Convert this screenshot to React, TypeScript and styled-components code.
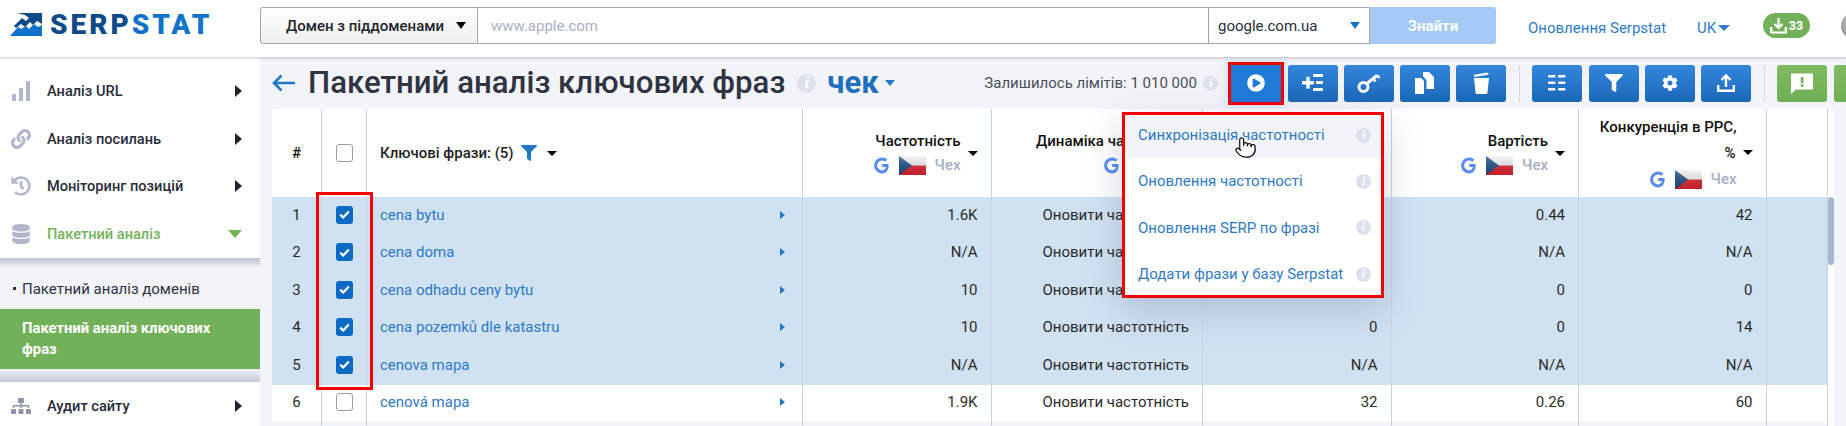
import React from "react";
import styled, { createGlobalStyle } from "styled-components";
import { FaCog, FaDatabase, FaFilter, FaHistory, FaLink, FaPlayCircle, FaSitemap } from "react-icons/fa";
import { Pointer } from "lucide-react";

const Global = createGlobalStyle`
  html, body { margin: 0; padding: 0; background: #fff; }
  body { font-family: Roboto, "Noto Sans", sans-serif; font-size: 15px; color: #2a2d3a; }
  * { box-sizing: border-box; }
`;

const Page = styled.div`
  width: 1846px; height: 426px; overflow: hidden; display: flex; flex-direction: column; background: #fff;
`;
const Top = styled.header`
  height: 57px; flex: none; display: flex; align-items: flex-start; box-shadow: 0 1px 3px rgba(90,95,115,.35); position: relative; z-index: 3; background: #fff;
`;
const LogoArea = styled.div`
  width: 260px; flex: none; height: 57px; padding: 13px 0 0 10px; display: flex; align-items: flex-start; gap: 8px;
`;
const LogoText = styled.div`
  font-family: Roboto, sans-serif; font-weight: 900; font-size: 28px; line-height: 23px; letter-spacing: 3px; color: #0f4b8b;
  span { color: #0f74c9; }
`;
const Search = styled.div`
  display: flex; height: 37px; margin-top: 7px; width: 1236px; flex: none;
`;
const ModeSelect = styled.div`
  width: 218px; flex: none; border: 1px solid #a0a4ad; border-radius: 3px 0 0 3px; background: linear-gradient(#fff, #efefef);
  display: flex; align-items: center; padding-left: 25px; font-weight: 500; font-size: 15px; color: #24262e; gap: 12px;
`;
const Input = styled.div`
  flex: 1; border: 1px solid #a0a4ad; border-left: none; display: flex; align-items: center; padding-left: 13px; color: #a9b1c6; font-size: 15px;
`;
const DomainSelect = styled.div`
  width: 161px; flex: none; border: 1px solid #a0a4ad; border-left: none; display: flex; align-items: center; padding: 0 9px; justify-content: space-between; color: #2a2d3a; font-size: 15px;
`;
const FindButton = styled.div`
  width: 126px; flex: none; background: #a3c9f4; color: #fff; font-weight: 700; font-size: 15px; border-radius: 0 3px 3px 0; display: flex; align-items: center; justify-content: center;
`;
const Updates = styled.a`
  margin: 19px 0 0 32px; line-height: 18px; color: #2f7ac5; font-size: 15px; white-space: nowrap; width: 138px; flex: none;
`;
const Lang = styled.div`
  margin: 19px 0 0 31px; line-height: 18px; color: #2f7ac5; font-size: 15px; display: flex; align-items: center; gap: 2px; width: 35px; flex: none;
`;
const Badge = styled.div`
  margin: 13px 0 0 31px; height: 25px; width: 47px; flex: none; border-radius: 13px; background: #72b159; color: #fff; font-weight: 700; font-size: 12.5px; display: flex; align-items: center; justify-content: center; gap: 2px;
`;
const Avatar = styled.div`
  margin: 13px 0 0 31px; width: 26px; height: 26px; flex: none; border-radius: 50%; background: radial-gradient(circle at 60% 40%, #eee, #777);
`;
const Body = styled.div`
  flex: 1; display: flex; min-height: 0;
`;
const Side = styled.nav`
  width: 260px; flex: none; padding-top: 10px; background: #fff; display: flex; flex-direction: column;
`;
const Item = styled.div<{ $active?: boolean; $strong?: boolean }>`
  height: 47.7px; flex: none; display: flex; align-items: center; padding: 0 18px 0 11px; font-weight: 500; font-size: 14.6px;
  color: ${p => (p.$active ? "#74b25a" : "#2a2d3a")};
  svg.ic { width: 20px; height: 20px; color: ${p => (p.$strong ? "#8d94ab" : "#b0b7cd")}; flex: none; }
`;
const ItemLabel = styled.span`
  margin-left: 16px; flex: 1;
`;
const Sub = styled.div`
  background: linear-gradient(#bcc2d3, #f2f4f9 10px, #f2f4f9 calc(100% - 13px), #c2c7d6);
  height: 124px; flex: none; padding-top: 10px; display: flex; flex-direction: column;
`;
const SubItem = styled.div`
  height: 41px; flex: none; display: flex; align-items: center; padding: 1px 0 0 13px; font-size: 15px; color: #2f3342; gap: 6px;
  &::before { content: ""; width: 3px; height: 3px; background: #2f3342; flex: none; }
`;
const SubActive = styled.div`
  height: 60px; flex: none; background: #72b159; color: #fff; font-weight: 700; font-size: 14.8px; line-height: 21px; padding: 9px 30px 0 22px;
`;
const Main = styled.main`
  flex: 1; min-width: 0; background: #f2f4f9; padding-left: 12px; position: relative; overflow: hidden;
`;
const Bar = styled.div`
  height: 52px; display: flex; align-items: center;
`;
const BackArrow = styled.svg`
  flex: none; width: 23px; height: 18px;
`;
const Title = styled.h1`
  margin: 0 0 0 13px; font-size: 31.2px; line-height: 40px; font-weight: 500; color: #2f3342; white-space: nowrap; flex: none;
`;
const Info = styled.span<{ $size?: number; $gap?: number }>`
  width: ${p => p.$size ?? 15}px; height: ${p => p.$size ?? 15}px; margin-left: ${p => p.$gap ?? 0}px; border-radius: 50%; background: #dde1ee; color: #fff; flex: none;
  display: inline-flex; align-items: center; justify-content: center; font-family: "Liberation Serif", serif; font-style: italic; font-weight: 700; font-size: ${p => (p.$size ?? 15) - 3}px;
`;
const Project = styled.div`
  margin-left: 11px; color: #1f6fbe; font-size: 31px; font-weight: 700; display: flex; align-items: center; gap: 6px; line-height: 40px; width: 67px; flex: none;
`;
const Limits = styled.div`
  margin-left: 90px; font-size: 15px; color: #4a4e5c; white-space: nowrap; width: 212px; flex: none;
`;
const Tools = styled.div`
  margin-left: 13px; display: flex; align-items: center; gap: 6.2px; flex: none;
`;
const Tool = styled.div<{ $green?: boolean; $active?: boolean }>`
  width: 50px; height: 37px; flex: none; border-radius: ${p => (p.$active ? 0 : 3)}px; display: flex; align-items: center; justify-content: center; color: #fff;
  background: ${p => p.$active ? "#1f7bd6" : p.$green ? "linear-gradient(#7fbb62, #70ae54)" : "linear-gradient(#3387dd, #1b67b7)"};
  outline: ${p => (p.$active ? "3px solid #f40000" : "none")};
  box-shadow: ${p => (p.$active ? "0 0 8px 5px rgba(60,130,220,.15)" : "none")};
`;
const Sep = styled.div`
  width: 1px; height: 37px; background: #d4d8e4; margin: 0 6.5px; flex: none;
`;
const Table = styled.div`
  position: relative; width: 1562px; height: 320px; background: #fff; border-radius: 3px 3px 0 0;
`;
const COLS = "50px 45px 436px 188.5px 211.5px 188.5px 187.5px 187.5px 61.5px";
const HeadRow = styled.div`
  display: grid; grid-template-columns: ${COLS}; height: 88px; width: 1556px;
`;
const Row = styled.div<{ $sel?: boolean; $odd?: boolean }>`
  display: grid; grid-template-columns: ${COLS}; height: 37.5px; width: 1556px; color: #2b2b2b; font-size: 15px;
  background: ${p => (p.$sel ? "#d0e1f2" : p.$odd ? "#f2f4f9" : "#fff")};
`;
const Cell = styled.div<{ $align?: string }>`
  display: flex; align-items: center; justify-content: ${p => p.$align ?? "flex-end"}; padding: 0 ${p => (p.$align ? 0 : 13)}px 2px 0;
  border-right: 1px solid #c8d2e6; min-width: 0; white-space: nowrap;
`;
const HeadCell = styled(Cell)<{ $pad?: number }>`
  color: #111; font-weight: 500; font-size: 15px; gap: 7px; padding: 0 ${p => (p.$align ? 0 : p.$pad ?? 13)}px 0 0; overflow: hidden;
`;
const PhraseCell = styled(Cell)`
  justify-content: space-between; padding: 0 17px 2px 13px; color: #2f7ac5;
`;
const Stack = styled.div<{ $gap?: number }>`
  display: flex; flex-direction: column; align-items: flex-end; gap: ${p => p.$gap ?? 6}px; flex: none;
`;
const Engine = styled.div<{ $shift?: number }>`
  display: flex; align-items: center; gap: 9px; color: #a7aec5; font-weight: 500; font-size: 15px; margin-right: ${p => p.$shift ?? 0}px;
`;
const Caret = styled.i<{ $c?: string; $w?: number; $h?: number; $dir?: "down" | "right" }>`
  flex: none; display: block; width: 0; height: 0;
  ${p => p.$dir === "right"
    ? `border-top: ${(p.$h ?? 8) / 2}px solid transparent; border-bottom: ${(p.$h ?? 8) / 2}px solid transparent; border-left: ${p.$w ?? 5}px solid ${p.$c ?? "#000"};`
    : `border-left: ${(p.$w ?? 9) / 2}px solid transparent; border-right: ${(p.$w ?? 9) / 2}px solid transparent; border-top: ${p.$h ?? 5}px solid ${p.$c ?? "#000"};`}
`;
const Box = styled.span<{ $on?: boolean }>`
  width: 17px; height: 18px; border-radius: 3px; display: inline-flex; align-items: center; justify-content: center;
  background: ${p => (p.$on ? "#0b6ac4" : "#fff")}; border: ${p => (p.$on ? "none" : "1px solid #9a9ca3")};
`;
const Label = styled.div`
  display: flex; align-items: center; padding-left: 13px; font-weight: 500; font-size: 15px; color: #1e1e24; gap: 7px;
`;
const LabelCaret = styled(Caret)`
  margin-left: 3px;
`;
const PpcLine = styled.div`
  display: flex; align-items: center; gap: 7px;
`;
const PpcTitle = styled.div`
  margin-right: 16px;
`;
const Menu = styled.div`
  position: absolute; left: 850px; top: 3px; width: 262px; height: 186px; background: #fff; z-index: 2;
  box-shadow: 0 12px 36px rgba(60,70,100,.22);
  &::after { content: ""; position: absolute; inset: 0; border: 3px solid #f40000; pointer-events: none; }
`;
const MenuItem = styled.div<{ $hover?: boolean }>`
  height: 46.3px; display: flex; align-items: center; justify-content: space-between; padding: 0 13px 0 16px; color: #2f7ac5; font-size: 15px; position: relative;
  background: ${p => (p.$hover ? "#f2f4f9" : "#fff")};
`;
const Hand = styled.span`
  position: absolute; left: 112px; top: 24px; line-height: 0;
`;
const CheckOutline = styled.div`
  position: absolute; left: 43.5px; top: 83px; width: 57.5px; height: 198px; border: 3px solid #f40000; z-index: 1; pointer-events: none;
`;
const Scroll = styled.div`
  position: absolute; left: 1556px; top: 88px; width: 6px; height: 68px; background: #a9b6cc; border-radius: 3px;
`;

const Google = () => (
  <svg width="16" height="17" viewBox="0 0 16 17" fill="none">
    <path d="M14.6 8.6c0-.5 0-1-.1-1.500H8.200v2.900h3.700c-.3 1.600-1.800 3.400-3.800 3.400a4.900 4.900 0 1 1 3.200-8.600l2.200-2.200A8 8 0 1 0 8.200 16.500c4.200 0 6.400-3.200 6.400-7.900Z" fill="#5b8def"/>
  </svg>
);
const Flag = () => (
  <svg width="27" height="19" viewBox="0 0 27 19">
    <defs>
      <linearGradient id="sh" x1="0" x2="0" y1="0" y2="1">
        <stop offset="0" stopColor="#fff" stopOpacity=".25"/>
        <stop offset="1" stopColor="#000" stopOpacity=".12"/>
      </linearGradient>
    </defs>
    <rect width="27" height="9.5" fill="#f1f1f3"/>
    <rect y="9.500" width="27" height="9.500" fill="#dc2430"/>
    <path d="M0 0 13 9.500 0 19Z" fill="#1d4e86"/>
    <rect width="27" height="19" fill="url(#sh)"/>
  </svg>
);
const Region = ({ shift }: { shift?: number }) => (
  <Engine $shift={shift}><Google /><Flag /><span>Чех</span></Engine>
);
const Check = () => (
  <svg width="11" height="9" viewBox="0 0 11 9" fill="none"><path d="M1.200 4.600 4.200 7.500 9.800 1.400" stroke="#fff" strokeWidth="2.200"/></svg>
);
const LogoMark = () => (
  <svg width="32" height="23" viewBox="0 0 32 23">
    <path d="M7 0h25v11l-5-3-4 4-3-3-5 5-4-3-5 4-2-2 8-8 4 3 3-3-4-3-8-2Z" fill="#0f4b8b"/>
    <path d="M0 23 8 14 11 16 16 13 19 16 24 11 28 14 32 12 32 23Z" fill="#0f74c9"/>
  </svg>
);
const Bars = () => (
  <svg className="ic" viewBox="0 0 20 20" fill="currentColor"><rect x="1" y="13" width="4" height="7" rx=".6"/><rect x="8" y="7" width="4" height="13" rx=".6"/><rect x="15" y="0" width="4" height="20" rx=".6"/></svg>
);
const PlusList = () => (
  <svg width="22" height="18" viewBox="0 0 22 18" fill="#fff"><rect x="0" y="7" width="12" height="3.400" rx=".8"/><rect x="4.300" y="2.700" width="3.400" height="12" rx=".8"/><rect x="11" y="0" width="10" height="3" rx=".8"/><rect x="14" y="7" width="7" height="3" rx=".8"/><rect x="11" y="14" width="10" height="3" rx=".8"/></svg>
);
const KeyIcon = () => (
  <svg width="24" height="22" viewBox="0 0 24 22" fill="none"><circle cx="6.500" cy="15" r="4.500" stroke="#fff" strokeWidth="3"/><path d="M10 11.500 20 3.500" stroke="#fff" strokeWidth="3"/><path d="M16 6.500l2.500 3M20 3l2.500 3" stroke="#fff" strokeWidth="2.500"/></svg>
);
const Copies = () => (
  <svg width="20" height="22" viewBox="0 0 20 22" fill="#fff"><path d="M0 6h6l3 3v13H0Z"/><path d="M8 0h6l5 5v12h-7.500V8L8 4.500Z"/></svg>
);
const Cup = () => (
  <svg width="17" height="22" viewBox="0 0 17 22" fill="#fff"><path d="M1 6h15l-1.500 14.500a1.500 1.500 0 0 1-1.500 1.500H4a1.500 1.500 0 0 1-1.500-1.500Z"/><path d="M1 2.800 15 0.500l.4 2.200-14 2.300Z"/></svg>
);
const Columns = () => (
  <svg width="18" height="16" viewBox="0 0 18 16" fill="#fff"><rect x="0" y="0" width="7.500" height="2.500" rx="1"/><rect x="10" y="0" width="7.500" height="2.500" rx="1"/><rect x="0" y="6.500" width="7.500" height="2.500" rx="1"/><rect x="10" y="6.500" width="7.500" height="2.500" rx="1"/><rect x="0" y="13" width="7.500" height="2.500" rx="1"/><rect x="10" y="13" width="7.500" height="2.500" rx="1"/></svg>
);
const Upload = () => (
  <svg width="18" height="19" viewBox="0 0 18 19" fill="none" stroke="#fff" strokeWidth="2.400"><path d="M9 13V2M4.500 6 9 1.500 13.500 6"/><path d="M1.200 11v5.800h15.600V11"/></svg>
);
const Feedback = () => (
  <svg width="24" height="24" viewBox="0 0 24 24"><path d="M1 2.500h22v16H6L1 23Z" fill="#fff"/><rect x="10.800" y="6" width="2.600" height="6" fill="#72b159"/><rect x="10.800" y="13.300" width="2.600" height="2.600" fill="#72b159"/></svg>
);
const BadgeIcon = () => (
  <svg width="17" height="17" viewBox="0 0 17 17" fill="none" stroke="#fff" strokeWidth="2.200"><path d="M8.500 1v9.500M4.500 7l4 4 4-4"/><path d="M1.200 10v5.500h14.600V10"/></svg>
);

const ROWS = [
  ["cena bytu", "1.6K", "", "0.44", "42"],
  ["cena doma", "N/A", "", "N/A", "N/A"],
  ["cena odhadu ceny bytu", "10", "", "0", "0"],
  ["cena pozemků dle katastru", "10", "0", "0", "14"],
  ["cenova mapa", "N/A", "N/A", "N/A", "N/A"],
  ["cenová mapa", "1.9K", "32", "0.26", "60"],
];
const MENU = ["Синхронізація частотності", "Оновлення частотності", "Оновлення SERP по фразі", "Додати фрази у базу Serpstat"];

export default function App() {
  return (
    <Page>
      <Global />
      <Top>
        <LogoArea>
          <LogoMark />
          <LogoText>SERP<span>STAT</span></LogoText>
        </LogoArea>
        <Search>
          <ModeSelect>Домен з піддоменами<Caret $w={11} $h={7} /></ModeSelect>
          <Input>www.apple.com</Input>
          <DomainSelect>google.com.ua<Caret $w={11} $h={7} $c="#1f6fbe" /></DomainSelect>
          <FindButton>Знайти</FindButton>
        </Search>
        <Updates>Оновлення Serpstat</Updates>
        <Lang>UK<Caret $w={12} $h={6} $c="#2f7ac5" /></Lang>
        <Badge><BadgeIcon />33</Badge>
        <Avatar />
      </Top>
      <Body>
        <Side>
          <Item><Bars /><ItemLabel>Аналіз URL</ItemLabel><Caret $dir="right" $w={7} $h={13} $c="#23252e" /></Item>
          <Item><FaLink className="ic" /><ItemLabel>Аналіз посилань</ItemLabel><Caret $dir="right" $w={7} $h={13} $c="#23252e" /></Item>
          <Item><FaHistory className="ic" /><ItemLabel>Моніторинг позицій</ItemLabel><Caret $dir="right" $w={7} $h={13} $c="#23252e" /></Item>
          <Item $active><FaDatabase className="ic" /><ItemLabel>Пакетний аналіз</ItemLabel><Caret $w={14} $h={8} $c="#74b25a" /></Item>
          <Sub>
            <SubItem>Пакетний аналіз доменів</SubItem>
            <SubActive>Пакетний аналіз ключових фраз</SubActive>
          </Sub>
          <Item $strong><FaSitemap className="ic" /><ItemLabel>Аудит сайту</ItemLabel><Caret $dir="right" $w={7} $h={13} $c="#23252e" /></Item>
        </Side>
        <Main>
          <Bar>
            <BackArrow viewBox="0 0 23 18" fill="none" stroke="#2277c7" strokeWidth="2.600"><path d="M23 9H2M9.500 1.500 2 9l7.500 7.500"/></BackArrow>
            <Title>Пакетний аналіз ключових фраз</Title>
            <Info $size={19} $gap={12}>i</Info>
            <Project>чек<Caret $w={11} $h={6} $c="#2277c7" /></Project>
            <Limits>Залишилось лімітів: 1 010 000</Limits>
            <Info $size={15} $gap={7}>i</Info>
            <Tools>
              <Tool $active><FaPlayCircle size={18} /></Tool>
              <Tool><PlusList /></Tool>
              <Tool><KeyIcon /></Tool>
              <Tool><Copies /></Tool>
              <Tool><Cup /></Tool>
              <Sep />
              <Tool><Columns /></Tool>
              <Tool><FaFilter size={18} /></Tool>
              <Tool><FaCog size={16} /></Tool>
              <Tool><Upload /></Tool>
              <Sep />
              <Tool $green><Feedback /></Tool>
              <Tool $green />
            </Tools>
          </Bar>
          <Table>
            <HeadRow>
              <HeadCell $align="center">#</HeadCell>
              <HeadCell $align="center"><Box /></HeadCell>
              <HeadCell $align="flex-start">
                <Label>Ключові фрази: (5)
                  <FaFilter size={16} color="#2277c7" />
                  <LabelCaret $w={10} $h={5} />
                </Label>
              </HeadCell>
              <HeadCell>
                <Stack>Частотність<Region /></Stack>
                <Caret $w={10} $h={5} />
              </HeadCell>
              <HeadCell $pad={11}>
                <Stack>Динаміка частотності<Region /></Stack>
              </HeadCell>
              <HeadCell />
              <HeadCell>
                <Stack>Вартість<Region /></Stack>
                <Caret $w={10} $h={5} />
              </HeadCell>
              <HeadCell>
                <Stack $gap={8}>
                  <PpcTitle>Конкуренція в PPC,</PpcTitle>
                  <PpcLine>%<Caret $w={10} $h={5} /></PpcLine>
                  <Region shift={16} />
                </Stack>
              </HeadCell>
              <HeadCell />
            </HeadRow>
            {ROWS.map((r, i) => (
              <Row key={r[0]} $sel={i < 5}>
                <Cell $align="center">{i + 1}</Cell>
                <Cell $align="center"><Box $on={i < 5}>{i < 5 && <Check />}</Box></Cell>
                <PhraseCell>{r[0]}<Caret $dir="right" $w={5} $h={9} $c="#2277c7" /></PhraseCell>
                <Cell>{r[1]}</Cell>
                <Cell>Оновити частотність</Cell>
                <Cell>{r[2]}</Cell>
                <Cell>{r[3]}</Cell>
                <Cell>{r[4]}</Cell>
                <Cell />
              </Row>
            ))}
            <Row $odd>
              {Array.from({ length: 9 }, (_, i) => <Cell key={i} />)}
            </Row>
            <CheckOutline />
            <Scroll />
            <Menu>
              {MENU.map((m, i) => (
                <MenuItem key={m} $hover={i === 0}>
                  {m}
                  <Info>i</Info>
                  {i === 0 && <Hand><Pointer size={23} strokeWidth={1.3} fill="#fff" color="#111" /></Hand>}
                </MenuItem>
              ))}
            </Menu>
          </Table>
        </Main>
      </Body>
    </Page>
  );
}
